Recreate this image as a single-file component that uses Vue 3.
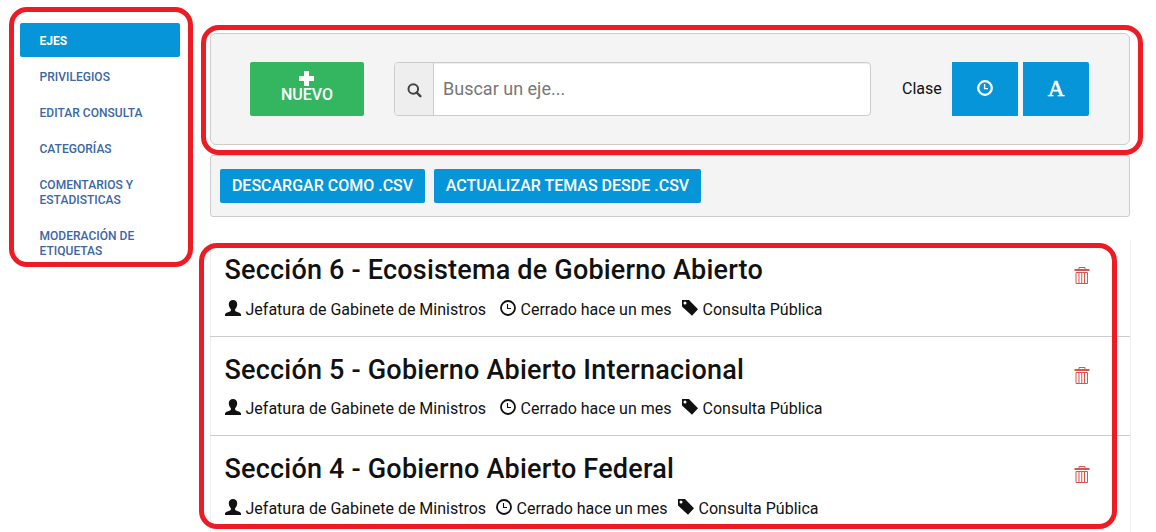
<script setup>
const menu = [
  ['EJES'],
  ['PRIVILEGIOS'],
  ['EDITAR CONSULTA'],
  ['CATEGORÍAS'],
  ['COMENTARIOS Y', 'ESTADISTICAS'],
  ['MODERACIÓN DE', 'ETIQUETAS'],
]
const sections = [
  { title: 'Sección 6 - Ecosistema de Gobierno Abierto', tight: false },
  { title: 'Sección 5 - Gobierno Abierto Internacional', tight: false },
  { title: 'Sección 4 - Gobierno Abierto Federal', tight: true },
]
</script>

<template>
  <div class="page">
    <nav class="sidebar">
      <a v-for="(lines, i) in menu" :key="i" class="item" :class="{ active: i === 0 }">
        <span v-for="line in lines" :key="line">{{ line }}</span>
      </a>
    </nav>

    <main class="main">
      <section class="panel toolbar">
        <button class="btn new">
          <svg width="15" height="15" viewBox="0 0 15 15" fill="#fff"><path d="M5 0h5v5h5v5h-5v5H5v-5H0V5h5z" /></svg>
          <span>NUEVO</span>
        </button>
        <div class="search">
          <span class="addon">
            <svg width="15" height="15" viewBox="0 0 15 15" fill="none" stroke="#444"><circle cx="6.3" cy="6" r="4.8" stroke-width="2" /><path d="M9.7 9.5l3.6 3.7" stroke-width="2.5" stroke-linecap="round" /></svg>
          </span>
          <input class="field" type="text" placeholder="Buscar un eje..." />
        </div>
        <span class="sort-label">Clase</span>
        <button class="btn sort clock">
          <svg width="16" height="16" viewBox="0 0 16 16" fill="none" stroke="#fff"><circle cx="8" cy="8" r="6.8" stroke-width="2.3" /><path d="M7.6 4v4.6H11" stroke-width="1.4" /></svg>
        </button>
        <button class="btn sort letter">A</button>
      </section>

      <section class="panel actions">
        <button class="btn">DESCARGAR COMO .CSV</button>
        <button class="btn">ACTUALIZAR TEMAS DESDE .CSV</button>
      </section>

      <section class="list">
        <article v-for="s in sections" :key="s.title" class="row">
          <div class="info">
            <h2>{{ s.title }}</h2>
            <div class="meta" :class="{ tight: s.tight }">
              <span class="fact author">
                <svg width="16" height="16" viewBox="0 0 16 16" fill="#111"><path d="M8 0c2.600 0 4.200 1.700 4.200 4.300 0 2-.9 3.700-2.100 4.900v1.300c0 .5.4.7.9.9 2.800.9 4.600 1.700 5 3V16H0v-1.600c.4-1.300 2.200-2.100 5-3 .5-.2.9-.4.9-.9V9.200C4.700 8 3.800 6.300 3.800 4.300 3.800 1.700 5.400 0 8 0z" /></svg>
                <span>Jefatura de Gabinete de Ministros</span>
              </span>
              <span class="fact">
                <svg width="16" height="16" viewBox="0 0 16 16" fill="none" stroke="#111"><circle cx="8" cy="8" r="7" stroke-width="1.8" /><path d="M7.500 4v4.500H11" stroke-width="1.100" /></svg>
                <span>Cerrado hace un mes</span>
              </span>
              <span class="fact tag">
                <svg width="16" height="16" viewBox="0 0 16 16" fill="#111" fill-rule="evenodd"><path d="M0 0h7l9 9.200L10 15.800 0 6.500zM3 1.500a1.500 1.500 0 1 0 0 3 1.500 1.500 0 0 0 0-3z" /></svg>
                <span>Consulta Pública</span>
              </span>
            </div>
          </div>
          <svg class="trash" width="16" height="18" viewBox="0 0 16 18" fill="none" stroke="#d9534f"><path d="M5 2.500v-2h6v2M2 5.500v11h11.500v-11zM5 6v10M7.750 6v10M10.500 6v10" /><path d="M.5 3h15" stroke-width="2" /></svg>
        </article>
      </section>
    </main>

    <div class="mark mark-menu"></div>
    <div class="mark mark-tools"></div>
    <div class="mark mark-list"></div>
  </div>
</template>

<style>
body { margin: 0; background: #fff; overflow: hidden; }
</style>

<style scoped>
* { box-sizing: border-box; }
.page {
  position: relative;
  display: flex;
  align-items: flex-start;
  gap: 30px;
  width: 1156px;
  height: 532px;
  padding-left: 20px;
  overflow: hidden;
  font-family: Roboto, "Liberation Sans", sans-serif;
  color: #111;
}
svg { display: block; flex: none; }
.sidebar {
  display: flex;
  flex-direction: column;
  gap: 2px;
  width: 160px;
  margin-top: 23px;
}
.item {
  display: flex;
  flex-direction: column;
  padding: 11px 20px 8px 19.5px;
  border-radius: 2px;
  font-size: 12px;
  line-height: 15px;
  font-weight: 500;
  letter-spacing: .03px;
  color: #3c66a4;
  white-space: nowrap;
}
.item.active { background: #0695d9; color: #fff; font-weight: 700; }
.main { width: 921px; padding-top: 33px; }
.panel {
  display: flex;
  width: 920px;
  background: #f4f4f4;
  border: 1px solid #ccc;
}
.toolbar { height: 112px; padding: 28px 40px 0 39px; border-radius: 6px; }
.actions { height: 62px; margin-top: 10px; padding: 13px 9px 0; gap: 9px; border-radius: 3px; }
.btn {
  height: 34px;
  padding: 0 12px;
  border: 0;
  border-radius: 2px;
  background: #0695d9;
  color: #fff;
  font: 500 16px/20px Roboto, sans-serif;
  white-space: nowrap;
}
.actions .btn { padding: 0 11.6px; }
.actions .btn:first-child { width: 205px; }
.actions .btn:last-child { width: 267px; }
.btn.new {
  display: flex;
  flex-direction: column;
  align-items: center;
  width: 114px;
  height: 54px;
  padding: 9px 13px 0 12px;
  background: #34b55f;
}
.btn.new span { margin: -1px 0 0 1px; }
.search {
  display: flex;
  width: 477px;
  height: 54px;
  margin-left: 30px;
  border: 1px solid #ccc;
  border-radius: 4px;
  background: #fff;
  overflow: hidden;
}
.addon {
  display: flex;
  align-items: center;
  width: 39px;
  padding: 2px 0 0 12px;
  background: #eee;
  border-right: 1px solid #ccc;
}
.field {
  flex: 1;
  padding: 0 9px;
  border: 0;
  background: none;
  box-shadow: inset 0 1px 1px rgba(0, 0, 0, .075);
  font: 400 18px/24px Roboto, sans-serif;
}
.field::placeholder { color: #777; opacity: 1; }
.sort-label { width: 50px; margin-left: 31px; font-size: 16px; line-height: 53px; }
.btn.sort {
  display: flex;
  align-items: center;
  justify-content: center;
  width: 66px;
  height: 54px;
  padding: 0;
  border-radius: 0;
}
.btn.clock { padding-bottom: 2px; }
.btn.letter { margin-left: 5px; border-radius: 0 2px 2px 0; font: 400 23px/54px "Liberation Serif", serif; -webkit-text-stroke: .6px #fff; }
.list {
  width: 921px;
  height: 292px;
  margin-top: 23px;
  border-right: 1px solid #eee;
  box-shadow: inset 1px 0 #eee;
}
.row {
  display: flex;
  justify-content: space-between;
  height: 99px;
  padding: 15px 40px 0 14.5px;
  border-bottom: 1px solid #ccc;
}
.row:first-child { height: 97px; padding-top: 12px; }
.row:last-child { border: 0; }
h2 { margin: 0; font-size: 27px; line-height: 36px; font-weight: 500; letter-spacing: .2px; white-space: nowrap; }
.meta { display: flex; margin-top: 10px; font-size: 16px; line-height: 24px; font-weight: 400; white-space: nowrap; }
.row:nth-child(2) .meta { margin-top: 9px; }
.fact { display: flex; align-items: center; gap: 5px; }
.fact svg { margin-top: -4px; }
.author { width: 275px; }
.tight .author { width: 271px; }
.tag { margin-left: 10px; }
.trash { margin-top: 15px; }
.mark { position: absolute; border: 5px solid #ed1c24; border-radius: 18px; pointer-events: none; }
.mark-menu { left: 9px; top: 7px; width: 184px; height: 260px; }
.mark-tools { left: 201px; top: 25px; width: 942px; height: 130px; }
.mark-list { left: 199px; top: 243px; width: 918px; height: 286px; }
</style>
